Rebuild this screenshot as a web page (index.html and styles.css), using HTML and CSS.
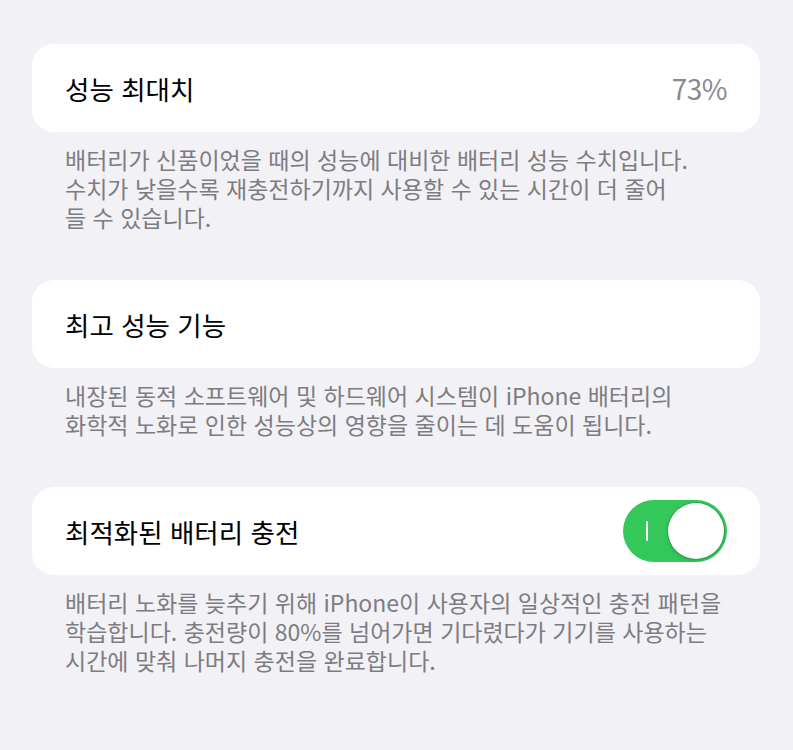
FILE: index.html
```html
<!DOCTYPE html>
<html lang="ko">
<head>
<meta charset="UTF-8">
<title>배터리 성능 상태</title>
<link rel="stylesheet" href="styles.css">
</head>
<body>

<div class="group">
	<div class="cell">
		<span class="label">성능 최대치</span>
		<span class="value">73%</span>
	</div>
	<div class="footer">배터리가 신품이었을 때의 성능에 대비한 배터리 성능 수치입니다.<br>수치가 낮을수록 재충전하기까지 사용할 수 있는 시간이 더 줄어<br>들 수 있습니다.</div>
</div>

<div class="group">
	<div class="cell">
		<span class="label">최고 성능 기능</span>
	</div>
	<div class="footer">내장된 동적 소프트웨어 및 하드웨어 시스템이 iPhone 배터리의<br>화학적 노화로 인한 성능상의 영향을 줄이는 데 도움이 됩니다.</div>
</div>

<div class="group">
	<div class="cell">
		<span class="label">최적화된 배터리 충전</span>
		<span class="switch on"><span class="mark"></span><span class="knob"></span></span>
	</div>
	<div class="footer">배터리 노화를 늦추기 위해 iPhone이 사용자의 일상적인 충전 패턴을<br>학습합니다. 충전량이 80%를 넘어가면 기다렸다가 기기를 사용하는<br>시간에 맞춰 나머지 충전을 완료합니다.</div>
</div>

</body>
</html>
```

FILE: styles.css
```css
body { margin: 0; padding: 44px 33px 0 32px; background: #f2f1f6;
	font-family: "Noto Sans CJK KR", "Noto Sans", sans-serif; color: #000; }

.group { margin-bottom: 48px; }

.cell { height: 88px; background: #fff; border-radius: 22px;
	display: flex; align-items: center; justify-content: space-between;
	padding: 0 33px; }

.label { font-size: 26.5px; }
.value { font-size: 28px; letter-spacing: -0.5px; color: #8a898e; }

.footer { padding: 13px 33px 0 33px; font-size: 23px; line-height: 29px;
	color: #7d7c82; }

/* toggle switch */
.switch { position: relative; width: 104px; height: 62px; border-radius: 31px;
	background: #e5e5ea; display: block; }
.switch.on { background: #34c759; }
.switch .knob { position: absolute; top: 3px; right: 3px; width: 56px; height: 56px;
	border-radius: 50%; background: #fff; box-shadow: 0 0 0 1px rgba(30,120,50,0.35), 0 2px 4px rgba(0,0,0,0.12); }
.switch .mark { position: absolute; left: 23px; top: 21px; width: 2px; height: 20px;
	background: #fff; border-radius: 1px; }
```
